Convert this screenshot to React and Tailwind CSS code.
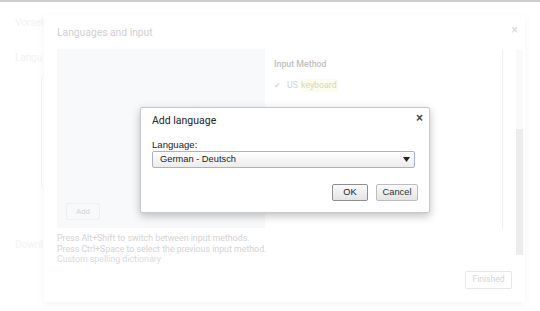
import React from "react";

export default function App() {
  return (
    <div className="relative w-[540px] h-[311px] overflow-hidden bg-white border-t-2 border-[#cfcfcf] font-['Liberation_Sans',Arial,sans-serif]">
      {/* settings page underneath */}
      <div className="pl-[15px] pt-[13px] text-[10px] text-[#f2f2f2] font-['Roboto',sans-serif]">
        <div>Vorseit</div>
        <div className="mt-[20px]">Langu</div>
        <div className="ml-[26px] mt-[12px] w-px h-[110px] bg-[#f3f3f3]"></div>
        <div className="mt-[50px]">Downl</div>
      </div>

      {/* Languages and input overlay */}
      <div className="absolute left-[44px] top-[13px] w-[481px] h-[287px] bg-white shadow-[0_2px_8px_rgba(0,0,0,0.05)] pl-[13px] font-['Roboto',sans-serif]">
        <div className="h-[34px] pt-[10px] text-[10.3px] text-[#d0d0d0]">Languages and input</div>
        <div className="absolute right-[7px] top-[6px] text-[12px] text-[#d8d8d8]">×</div>

        <div className="flex h-[179px] mr-[22px]">
          <div className="relative w-[208px] bg-[#f8f9fb]">
            <div className="absolute left-[9px] bottom-[8px] w-[34px] h-[17px] border border-[#efefef] rounded-[2px] text-[8px] text-[#d4d4d4] flex items-center justify-center">
              Add
            </div>
          </div>
          <div className="flex-1 border-r border-[#eeeeee] pl-[9px] pt-[9px]">
            <div className="text-[8.8px] font-medium text-[#c0c0c0]">Input Method</div>
            <div className="flex items-center mt-[8px] text-[8.8px]">
              <span className="text-[#dcdcdc] text-[8px] mr-[6px]">✔</span>
              <span className="text-[#d2d2d2]">US</span>
              <span className="ml-[2px] text-[#d6d6bc] bg-[#fdfdee] px-[1px]">keyboard</span>
            </div>
          </div>
        </div>

        <div className="mt-[5px] text-[8.8px] leading-[10.5px] text-[#d3d3d3]">
          <div>Press Alt+Shift to switch between input methods.</div>
          <div>Press Ctrl+Space to select the previous input method.</div>
          <div className="text-[#d6dbe2]">Custom spelling dictionary</div>
        </div>

        <div className="flex justify-end mr-[13px] mt-[6px]">
          <div className="w-[47px] h-[18px] border border-[#e7e7e7] rounded-[2px] text-[8.6px] text-[#d6d6d6] flex items-center justify-center">
            Finished
          </div>
        </div>

        <div className="absolute right-[2px] top-[34px] w-[7px] h-[206px] bg-[#fafafa]">
          <div className="mt-[80px] h-[126px] bg-[#ececec]"></div>
        </div>
      </div>

      {/* Add language dialog */}
      <div className="absolute left-[140px] top-[105px] w-[290px] h-[106px] bg-white border border-[#c9c9c9] rounded-[2px] shadow-[0_3px_8px_rgba(0,0,0,0.25)] pl-[11px] pr-[13px]">
        <div className="absolute right-[6px] top-[1px] text-[12px] font-bold text-[#444]">×</div>
        <div className="pt-[6px] text-[10.5px] leading-[14px] text-[#222] font-['Roboto',sans-serif]">Add language</div>
        <div className="mt-[11px] text-[9.6px] leading-[12px] text-[#222]">Language:</div>
        <div className="flex items-center justify-between w-[263px] h-[17px] border border-[#a8b4c6] rounded-[2px] bg-gradient-to-b from-white to-[#ececec] pl-[7px] pr-[4px] text-[9.3px] text-[#222]">
          <span>German - Deutsch</span>
          <svg width="7" height="5" viewBox="0 0 7 5">
            <path d="M0 0 L7 0 L3.5 5 Z" fill="#222" />
          </svg>
        </div>
        <div className="flex justify-end gap-[8px] mt-[16px] mr-[-2px]">
          <div className="w-[36px] h-[17px] border border-[#8e8e8e] rounded-[2px] bg-gradient-to-b from-[#fafafa] to-[#e4e4e4] flex items-center justify-center text-[9.3px] text-[#222]">
            OK
          </div>
          <div className="w-[42px] h-[17px] border border-[#bdbdbd] rounded-[2px] bg-gradient-to-b from-[#fafafa] to-[#e4e4e4] flex items-center justify-center text-[9.3px] text-[#333]">
            Cancel
          </div>
        </div>
      </div>
    </div>
  );
}
